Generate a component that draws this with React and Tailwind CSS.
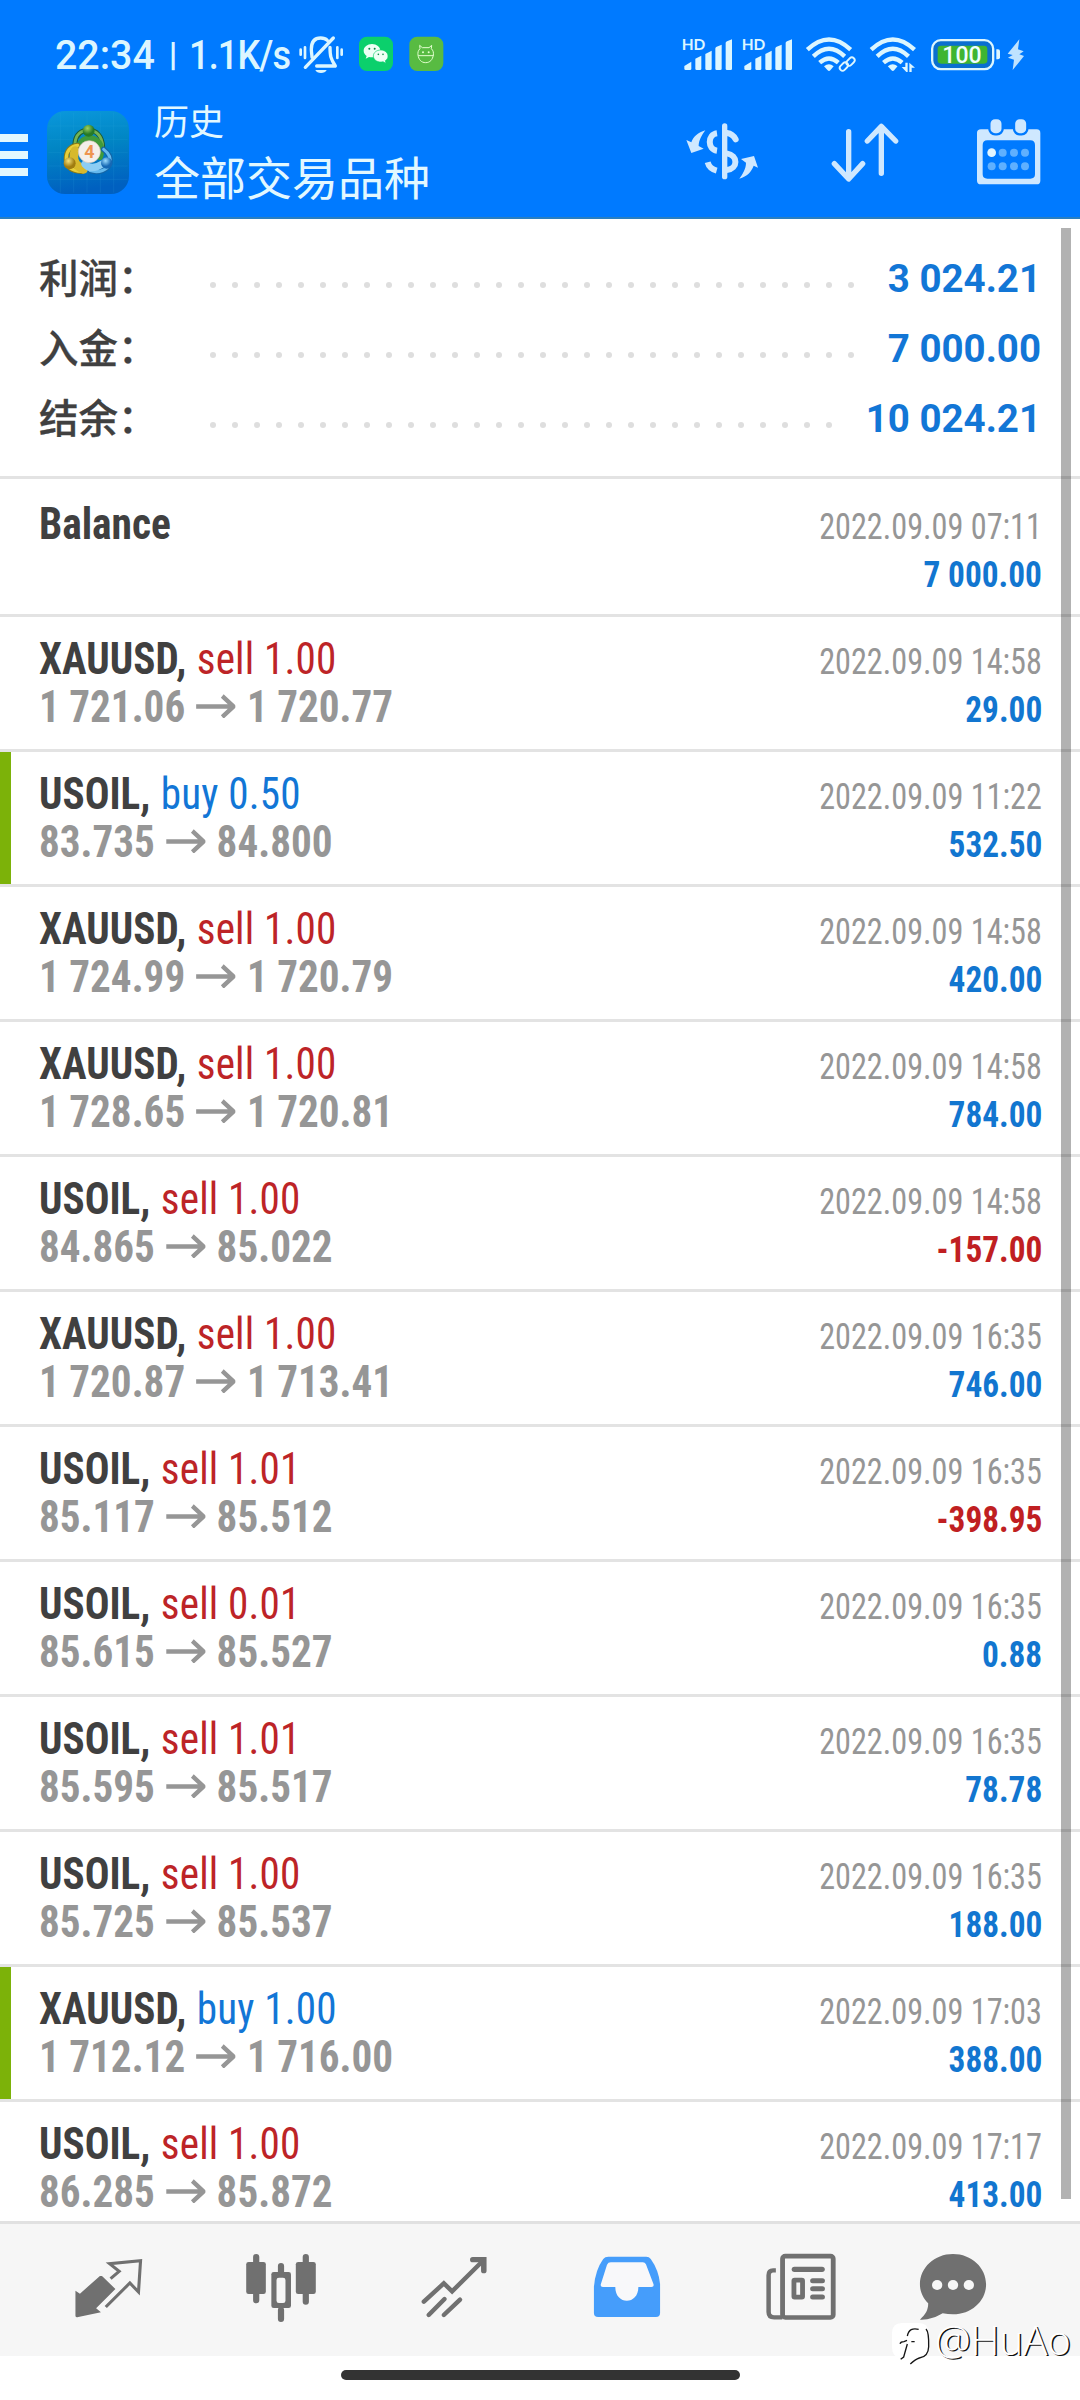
import React from 'react';

const INK = '#dcf6ff';
const ICON = '#cfe8ff';

const summary = [
  { label: '利润：', value: '3 024.21', dots: 30 },
  { label: '入金：', value: '7 000.00', dots: 30 },
  { label: '结余：', value: '10 024.21', dots: 29 },
];

const deals = [
  { symbol: 'XAUUSD', side: 'sell', lots: '1.00', from: '1 721.06', to: '1 720.77', time: '2022.09.09 14:58', profit: '29.00' },
  { symbol: 'USOIL', side: 'buy', lots: '0.50', from: '83.735', to: '84.800', time: '2022.09.09 11:22', profit: '532.50', marked: true },
  { symbol: 'XAUUSD', side: 'sell', lots: '1.00', from: '1 724.99', to: '1 720.79', time: '2022.09.09 14:58', profit: '420.00' },
  { symbol: 'XAUUSD', side: 'sell', lots: '1.00', from: '1 728.65', to: '1 720.81', time: '2022.09.09 14:58', profit: '784.00' },
  { symbol: 'USOIL', side: 'sell', lots: '1.00', from: '84.865', to: '85.022', time: '2022.09.09 14:58', profit: '-157.00' },
  { symbol: 'XAUUSD', side: 'sell', lots: '1.00', from: '1 720.87', to: '1 713.41', time: '2022.09.09 16:35', profit: '746.00' },
  { symbol: 'USOIL', side: 'sell', lots: '1.01', from: '85.117', to: '85.512', time: '2022.09.09 16:35', profit: '-398.95' },
  { symbol: 'USOIL', side: 'sell', lots: '0.01', from: '85.615', to: '85.527', time: '2022.09.09 16:35', profit: '0.88' },
  { symbol: 'USOIL', side: 'sell', lots: '1.01', from: '85.595', to: '85.517', time: '2022.09.09 16:35', profit: '78.78' },
  { symbol: 'USOIL', side: 'sell', lots: '1.00', from: '85.725', to: '85.537', time: '2022.09.09 16:35', profit: '188.00' },
  { symbol: 'XAUUSD', side: 'buy', lots: '1.00', from: '1 712.12', to: '1 716.00', time: '2022.09.09 17:03', profit: '388.00', marked: true },
  { symbol: 'USOIL', side: 'sell', lots: '1.00', from: '86.285', to: '85.872', time: '2022.09.09 17:17', profit: '413.00' },
];

function BellOff() {
  return (
    <svg className="h-10 w-[62px] shrink-0" viewBox="0 45 186 120" fill="none" stroke={INK} strokeLinecap="round">
      <path d="M66 112 C66 104 64 98 64 88 C64 64 76 54 92 54 C100 54 108 57 112 61" strokeWidth="10" />
      <path d="M120 82 C120 108 122 116 136 138 H80" strokeWidth="10" strokeLinejoin="round" />
      <path d="M130 54 L46 142" strokeWidth="10" />
      <path d="M76 150 H110 C106 162 80 162 76 150Z" fill={INK} stroke="none" />
      <path d="M32 89 V104 M45 82 V114 M142 82 V114 M155 89 V104" strokeWidth="8" />
    </svg>
  );
}

function WeChat() {
  return (
    <svg className="h-10 w-[50px] shrink-0" viewBox="186 45 150 120">
      <rect x="207" y="50" width="102" height="103" rx="24" fill="#0bd06c" />
      <path d="M246 72c-14 0-25 9-25 20 0 7 4 12 9 16l-3 8 10-5c3 1 6 1 9 1 14 0 25-9 25-20s-11-20-25-20Z" fill="#eefff6" />
      <path d="M272 90c-12 0-22 8-22 18s10 18 22 18c3 0 5 0 7-1l9 5-2-8c5-3 8-8 8-14 0-10-10-18-22-18Z" fill="#eefff6" stroke="#0bd06c" strokeWidth="2" />
      <g fill="#0a8a4a">
        <circle cx="238" cy="86" r="3" /><circle cx="254" cy="86" r="3" /><circle cx="265" cy="103" r="2.5" /><circle cx="279" cy="103" r="2.5" />
      </g>
    </svg>
  );
}

function BullBadge() {
  return (
    <svg className="h-10 w-[50px] shrink-0" viewBox="336 45 150 120">
      <rect x="358" y="50" width="102" height="103" rx="24" fill="#58bb42" />
      <g fill="none" stroke="#e4ffd0" strokeWidth="3" strokeLinejoin="round">
        <path d="M390 86 L389 76 L397 83 H417 L425 76 L424 86 C430 92 431 98 430 105 C428 119 420 128 407 128 C394 128 386 119 384 105 C383 98 384 92 390 86Z" />
        <path d="M385 107 H430" />
      </g>
      <circle cx="399" cy="97" r="3" fill="#e4ffd0" /><circle cx="416" cy="97" r="3" fill="#e4ffd0" />
    </svg>
  );
}

function Signal() {
  return (
    <svg className="h-10 w-[60px] shrink-0" viewBox="36 45 180 120" fill={INK}>
      <text x="35" y="90" fontFamily="Lato, sans-serif" fontWeight="700" fontSize="47" textLength="71" lengthAdjust="spacingAndGlyphs">HD</text>
      <path d="M43 146 V138 L64 125 V146 Q64 150 60 150 H47 Q43 150 43 146Z" />
      <path d="M76 146 V116 L94 107 V146 Q94 150 90 150 H80 Q76 150 76 146Z" />
      <path d="M106 146 V102 L125 92 V146 Q125 150 121 150 H110 Q106 150 106 146Z" />
      <path d="M136 146 V86 Q136 82 140 80 L155 74 V146 Q155 150 151 150 H140 Q136 150 136 146Z" />
      <path d="M167 146 V69 Q167 66 171 64 L186 58 V146 Q186 150 182 150 H171 Q167 150 167 146Z" />
    </svg>
  );
}

function WifiArcs() {
  return (
    <g>
      <g fill="none" stroke={INK} strokeWidth="13">
        <path d="M412 89 Q477 28 542 89" />
        <path d="M430 109 Q477 63 524 109" />
        <path d="M449 128 Q477 103 505 128" />
      </g>
      <path d="M462 139 Q477 127 491 139 L481 151 Q477 155 473 151Z" fill={INK} />
    </g>
  );
}

function WifiLink() {
  return (
    <svg className="h-10 w-[65px] shrink-0" viewBox="396 45 195 120">
      <WifiArcs />
      <g fill="none" stroke="#007aff" strokeWidth="13"><rect x="508" y="130" width="30" height="18" rx="9" transform="rotate(-45 523 139)" /><rect x="526" y="116" width="30" height="18" rx="9" transform="rotate(-45 541 125)" /></g>
      <g fill="none" stroke={INK} strokeWidth="5.500">
        <rect x="508" y="131" width="28" height="17" rx="8.500" transform="rotate(-45 522 140)" />
        <rect x="528" y="116" width="28" height="17" rx="8.500" transform="rotate(-45 542 125)" />
      </g>
    </svg>
  );
}

function WifiData() {
  return (
    <svg className="h-10 w-[60px] shrink-0" viewBox="591 45 180 120">
      <g transform="translate(191.500 0)"><WifiArcs /></g>
      <path d="M692 160 V136 L703 122 H740 V160Z" fill="#007aff" />
      <path d="M706 128 H713 V156 H709 L695 141 H706Z M718 156 V128 L735 143 H725 V156Z" fill={INK} />
    </svg>
  );
}

function Battery() {
  return (
    <svg className="h-10 w-[77px] shrink-0" viewBox="771 45 231 120">
      <rect x="786.500" y="60.500" width="183" height="87" rx="26" fill="#0a6fd0" stroke={INK} strokeWidth="7" />
      <rect x="803" y="77" width="149" height="54" rx="10" fill="#3fb531" />
      <path d="M979 88 H984 Q990 88 990 94 V112 Q990 118 984 118 H979Z" fill={INK} />
      <text x="876" y="129" textAnchor="middle" fontFamily="Roboto, sans-serif" fontWeight="500" fontSize="73" textLength="118" lengthAdjust="spacingAndGlyphs" fill="#efffff">100</text>
    </svg>
  );
}

function Bolt() {
  return (
    <svg className="h-10 w-[23px] shrink-0" viewBox="1002 45 69 120">
      <path d="M1048 58 L1013 101 L1028 105 L1014 113 L1032 119 L1028 150 L1062 108 L1048 103 L1061 94 L1044 88Z" fill="#bfe3ff" />
    </svg>
  );
}

function AppLogo() {
  return (
    <svg className="ml-[19px] mt-[34px] h-[83px] w-[82px] shrink-0" viewBox="20 35 246 249">
      <defs>
        <linearGradient id="tile" x1="0" y1="0" x2="0.15" y2="1">
          <stop offset="0" stopColor="#0a98dc" /><stop offset="0.45" stopColor="#0186c4" /><stop offset="1" stopColor="#0060c0" />
        </linearGradient>
        <radialGradient id="green" cx="0.4" cy="0.3"><stop offset="0" stopColor="#9fd060" /><stop offset="1" stopColor="#257a28" /></radialGradient>
        <radialGradient id="gold" cx="0.4" cy="0.3"><stop offset="0" stopColor="#f6e27a" /><stop offset="1" stopColor="#a07c10" /></radialGradient>
        <radialGradient id="sky" cx="0.4" cy="0.3"><stop offset="0" stopColor="#9bdcff" /><stop offset="1" stopColor="#1668b4" /></radialGradient>
      </defs>
      <rect x="20" y="35" width="246" height="249" rx="54" fill="url(#tile)" />
      <g stroke="#3bb4e4" strokeWidth="1" opacity="0.4">
        <path d="M60 40V280M100 40V280M140 40V280M180 40V280M220 40V280M24 80H262M24 120H262M24 160H262M24 200H262M24 240H262" />
      </g>
      <g fill="none" strokeLinecap="round">
        <path d="M104 132 C106 106 122 93 144 93 C168 93 186 110 187 144" stroke="#1c5c34" strokeWidth="15" />
        <path d="M104 132 C106 106 122 93 144 93 C168 93 186 110 187 144" stroke="#74b354" strokeWidth="9" />
        <path d="M118 140 C126 112 168 108 180 140 C182 150 182 162 178 172" stroke="#3f9a3c" strokeWidth="20" />
        <path d="M112 138 C90 140 78 156 78 178 C78 200 92 214 124 216" stroke="#8a7a18" strokeWidth="16" />
        <path d="M112 138 C90 140 78 156 78 178 C78 200 92 214 124 216" stroke="#e8cf3a" strokeWidth="10" />
        <path d="M104 154 C94 182 108 202 130 210" stroke="#d7b92c" strokeWidth="26" />
        <path d="M190 150 C206 162 212 178 208 192 C202 212 176 222 150 214" stroke="#1565a5" strokeWidth="16" />
        <path d="M190 150 C206 162 212 178 208 192 C202 212 176 222 150 214" stroke="#64b9ee" strokeWidth="9" />
        <path d="M134 194 C146 208 164 208 186 194" stroke="#8ccdf4" strokeWidth="22" />
      </g>
      <circle cx="145" cy="94" r="18" fill="url(#green)" />
      <circle cx="88" cy="192" r="18" fill="url(#gold)" />
      <circle cx="199" cy="191" r="17" fill="url(#sky)" />
      <circle cx="147" cy="157" r="33" fill="#f4efea" stroke="#d9c9b8" strokeWidth="2" />
      <text x="147" y="177" textAnchor="middle" fontFamily="Roboto, sans-serif" fontWeight="700" fontSize="54" fill="#ee9550">4</text>
    </svg>
  );
}

function Header() {
  return (
    <header className="h-[219px] shrink-0 border-b-2 border-[#2a7fc0] bg-[#007aff] text-[#e2f8ff]">
      <div className="flex h-[77px] items-start pt-[35px]">
        <div className="ml-[55px] flex h-10 w-[235px] shrink-0 items-center whitespace-nowrap font-[Roboto] text-[41px] font-medium leading-10 text-[#dcf6ff]">
          <span className="w-[114px] shrink-0"><span className="inline-block origin-left scale-x-[0.96]">22:34</span></span>
          <span className="mt-[-3px] flex w-[8px] shrink-0 justify-center text-[34px] font-bold">|</span>
          <span className="ml-[12px] w-[101px] shrink-0"><span className="inline-block origin-left scale-x-[0.88] tracking-[-1px]">1.1K/s</span></span>
        </div>
        <BellOff />
        <WeChat />
        <BullBadge />
        <div className="ml-[230px] flex">
          <Signal />
          <Signal />
          <WifiLink />
          <WifiData />
          <Battery />
          <Bolt />
        </div>
      </div>
      <div className="flex items-start">
        <div className="mt-[57px] flex w-7 flex-col gap-[9px]">
          <div className="h-2 bg-[#e2f8ff]" />
          <div className="h-2 bg-[#e2f8ff]" />
          <div className="h-2 bg-[#e2f8ff]" />
        </div>
        <AppLogo />
        <div className="ml-[25px] mt-[21px] w-[501px] font-['Noto_Sans_CJK_SC']">
          <div className="text-[35px] leading-[44px]">历史</div>
          <div className="mt-[5px] text-[46px] leading-[56px]">全部交易品种</div>
        </div>
        <svg className="ml-[28px] mt-[44px] h-[60px] w-[76px] shrink-0" viewBox="39 303 228 180" fill="none" stroke={ICON}>
          <path d="M164 318 V470" strokeWidth="16" strokeLinecap="round" />
          <path d="M171 339 Q188 341 197 358" strokeWidth="18" strokeLinecap="round" />
          <path d="M141 340 C112 344 112 388 141 392" strokeWidth="18" />
          <path d="M113 427 Q118 446 140 452" strokeWidth="18" />
          <path d="M170 400 C205 406 205 446 170 450" strokeWidth="18" />
          <path d="M106 331 C84 338 70 350 64 367 L49 360 L64 399 L101 386 L86 378 C86 362 96 344 106 331Z" fill={ICON} stroke="none" />
          <path d="M208 476 C232 468 244 456 251 437 L264 443 L252 408 L213 417 L228 428 C228 446 218 462 208 476Z" fill={ICON} stroke="none" />
        </svg>
        <svg className="ml-[71px] mt-[44px] h-[64px] w-[70px] shrink-0" viewBox="480 303 210 192" fill="none" stroke={ICON} strokeWidth="16" strokeLinecap="round" strokeLinejoin="round">
          <path d="M536 335 V476 M493 431 L536 477 L578 431" />
          <path d="M634 460 V320 M592 363 L634 319 L677 363" />
        </svg>
        <svg className="ml-[75px] mt-[40px] h-[70px] w-[68px] shrink-0" viewBox="915 291 204 210" fill="none">
          <path fillRule="evenodd" fill={ICON} d="M933 328 H1100 Q1111 328 1111 339 V482 Q1111 493 1100 493 H933 Q921 493 921 482 V339 Q921 328 933 328Z M952 361 Q938 361 938 375 V463 Q938 476 952 476 H1081 Q1095 476 1095 463 V375 Q1095 361 1081 361Z" />
          <rect x="958" y="294" width="40" height="49" rx="17" fill={ICON} stroke="#007aff" strokeWidth="7" />
          <rect x="1032" y="294" width="40" height="49" rx="17" fill={ICON} stroke="#007aff" strokeWidth="7" />
          <circle cx="965" cy="398" r="13" fill="#e2f5ff" />
          <g fill="#5fb0ff">
            <circle cx="998" cy="398" r="12" /><circle cx="1032" cy="398" r="12" /><circle cx="1065" cy="398" r="12" />
            <circle cx="965" cy="439" r="12" /><circle cx="998" cy="439" r="12" /><circle cx="1032" cy="439" r="12" /><circle cx="1065" cy="439" r="12" />
          </g>
        </svg>
      </div>
    </header>
  );
}

function Summary() {
  return (
    <section className="h-[257px] shrink-0 pl-[39px] pr-[39px] pt-[22px]">
      {summary.map((row) => (
        <div key={row.label} className="flex h-[70px] items-center">
          <div className="mt-[-1px] w-[171px] whitespace-nowrap font-['Noto_Sans_CJK_SC'] text-[39.5px] font-medium leading-[70px] text-[#404040] [-webkit-text-stroke:0.3px_#404040]">{row.label}</div>
          <div className="mt-[17px] flex gap-4">
            {Array.from({ length: row.dots }, (_, i) => (
              <span key={i} className="size-1.5 rounded-full bg-[#dedede]" />
            ))}
          </div>
          <div className="ml-auto mt-[5px] whitespace-nowrap font-[Roboto] text-[38.5px] font-bold leading-[70px] text-[#1276d6]">{row.value}</div>
        </div>
      ))}
    </section>
  );
}

function Stamp({ time, value }) {
  return (
    <div className="ml-auto mt-[3px] flex flex-col items-end text-[36px] leading-[48px]">
      <div className="origin-right scale-x-[0.895] text-[#969696]">{time}</div>
      <div className={'origin-right scale-x-[0.925] font-bold ' + (value.startsWith('-') ? 'text-[#c01f22]' : 'text-[#1276d0]')}>{value}</div>
    </div>
  );
}

function Arrow() {
  return (
    <svg className="mx-[12px] mt-[-2px] h-[24px] w-[42px] shrink-0" viewBox="0 0 42 24" fill="none" stroke="#969696" strokeWidth="4.500">
      <path d="M0 12.500 H40 M28 2 L40 12.500 L28 23" />
    </svg>
  );
}

function Deal({ deal }) {
  return (
    <div className="flex h-[135px] shrink-0 border-t-[3px] border-[#e3e3e3]">
      <div className={'w-[11px] ' + (deal.marked ? 'bg-[#7cb209]' : '')} />
      <div className="flex flex-1 whitespace-nowrap pl-[28px] pr-[38px] pt-[18px]">
        <div className="text-[44px] leading-[48px]">
          <div className="origin-left scale-x-[0.935]">
            <span className="font-bold text-[#404040]">{deal.symbol},</span>{' '}
            <span className={'ml-[1px] tracking-[0.2px] ' + (deal.side === 'buy' ? 'text-[#1276d6]' : 'text-[#bd2427]')}>{deal.side} {deal.lots}</span>
          </div>
          <div className="flex origin-left scale-x-[0.935] items-center font-bold text-[#969696]">
            <span>{deal.from}</span>
            <Arrow />
            <span>{deal.to}</span>
          </div>
        </div>
        <Stamp time={deal.time} value={deal.profit} />
      </div>
    </div>
  );
}

function History() {
  return (
    <main className="relative flex h-[2002px] shrink-0 flex-col overflow-hidden font-['Roboto_Condensed']">
      <Summary />
      <div className="flex h-[138px] shrink-0 whitespace-nowrap border-t-[3px] border-[#e3e3e3] pl-[39px] pr-[38px] pt-[21px]">
        <div className="origin-left scale-x-[0.94] text-[44px] font-bold leading-[48px] text-[#404040]">Balance</div>
        <Stamp time="2022.09.09 07:11" value="7 000.00" />
      </div>
      {deals.map((deal, i) => <Deal key={i} deal={deal} />)}
      <div className="absolute right-[9px] top-[9px] h-[1971px] w-[10px] bg-black/30" />
    </main>
  );
}

function TabBar() {
  const cls = 'h-[72px] w-[72px] shrink-0';
  return (
    <nav className="flex h-[135px] shrink-0 border-t-[3px] border-[#e1e1e1] bg-[#f6f6f6] pl-[72px] pt-[28px]">
      <svg className={cls} viewBox="209 396 209 216" preserveAspectRatio="none" fill="none">
        <path d="M296 468 L335 507 L279 565 L293 577 L224 592 Q219 592 219 587 V512 L232 521 L290 468Z" fill="#707070" />
        <path d="M321 476 L346 454 L318 431 L408 422 L402 516 L377 489 L307 561" stroke="#707070" strokeWidth="9" />
      </svg>
      <svg className={cls + ' ml-[101px]'} viewBox="711.5 396 209 216" preserveAspectRatio="none" fill="none">
        <g stroke="#707070" strokeWidth="18" strokeLinecap="round"><path d="M744 411 V541 M888 411 V545 M816 438 V460 M816 570 V597" /></g>
        <g fill="#707070"><rect x="715" y="426" width="57" height="96" rx="7" /><rect x="859" y="426" width="58" height="96" rx="7" /><rect x="788" y="456" width="57" height="108" rx="7" /></g>
        <rect x="803" y="473" width="26" height="76" rx="7" fill="#f6f6f6" />
      </svg>
      <svg className={cls + ' ml-[101px]'} viewBox="1214 396 209 216" preserveAspectRatio="none" fill="none" stroke="#707070" strokeWidth="13">
        <path d="M1231 545 L1289 490 L1313 514 L1404 421" strokeLinecap="round" />
        <path d="M1373 419 H1405 V452" strokeWidth="16" strokeLinecap="round" />
        <path d="M1245 585 L1291 537 M1289 585 L1336 539" strokeLinecap="round" />
      </svg>
      <svg className={cls + ' ml-[101px]'} viewBox="149.5 396 209 216" preserveAspectRatio="none">
        <path d="M200 410 H310 Q318 410 323 417 Q346 450 350 492 V578 Q350 591 338 591 H170 Q158 591 158 578 V500 Q162 450 185 417 Q190 410 200 410Z" fill="#459dfb" />
        <path d="M207 427 H300 Q306 427 309 433 L331 493 Q333 500 325 501 H287 C287 556 220 556 220 501 H184 Q176 500 178 493 L196 434 Q199 427 207 427Z" fill="#f8f8fa" />
      </svg>
      <svg className={cls + ' ml-[102px]'} viewBox="653.5 396 209 216" preserveAspectRatio="none" fill="none" stroke="#707070">
        <rect x="704.500" y="408.500" width="147" height="184" rx="8" strokeWidth="14" />
        <path d="M685 451 H677 Q664 451 664 466 V576 Q664 592 680 592 H704" strokeWidth="13" />
        <path d="M739 448 H819" strokeWidth="16" strokeLinecap="round" />
        <rect x="737.500" y="480.500" width="25" height="51" rx="2" strokeWidth="14" />
        <path d="M792 482 H820 M792 506 H820 M792 531 H820" strokeWidth="15" strokeLinecap="round" />
      </svg>
      <svg className={cls + ' ml-[80px]'} viewBox="1094.5 396 209 216" preserveAspectRatio="none">
        <path d="M1199 402 C1253 402 1295 443 1295 493 C1295 543 1253 583 1199 583 Q1184 583 1169 580 C1150 592 1128 600 1103 599 C1120 583 1127 570 1127 550 C1112 534 1103 515 1103 493 C1103 443 1145 402 1199 402Z" fill="#707070" />
        <g fill="#f7f7f7"><circle cx="1153" cy="495" r="15" /><circle cx="1199" cy="495" r="15" /><circle cx="1245" cy="495" r="15" /></g>
      </svg>
    </nav>
  );
}

function Watermark() {
  return (
    <div className="absolute left-[891px] top-[2321px] flex items-start">
      <svg className="h-[46px] w-[40px] shrink-0" viewBox="33 273 120 138" fill="none">
        <path d="M66 279 H116 Q146 279 146 310 V350 Q146 382 116 384 Q108 394 94 401 L88 386 H66 Q36 384 36 352 V310 Q36 279 66 279Z" fill="#fff" />
        <path d="M138 297 Q147 306 146 350 Q145 380 118 384 Q106 388 91 402" stroke="#161616" strokeWidth="4" />
        <path d="M116 298 C98 294 86 298 82 318 M60 341 Q62 335 72 335 L81 331 M94 335 H104 M82 342 L71 381 L62 388" stroke="#161616" strokeWidth="4" />
      </svg>
      <span className="ml-[4px] mt-[-7px] inline-block origin-left scale-x-[0.98] whitespace-nowrap font-['Open_Sans'] text-[41px] font-light leading-[50px] text-white [text-shadow:1.5px_1px_0_#111]">@HuAo</span>
    </div>
  );
}

export default function App() {
  return (
    <div className="relative flex h-[2400px] w-[1080px] flex-col overflow-hidden bg-white">
      <Header />
      <History />
      <TabBar />
      <div className="flex h-[44px] justify-center pt-[14px]">
        <div className="h-[10px] w-[399px] rounded-full bg-[#333]" />
      </div>
      <Watermark />
    </div>
  );
}
